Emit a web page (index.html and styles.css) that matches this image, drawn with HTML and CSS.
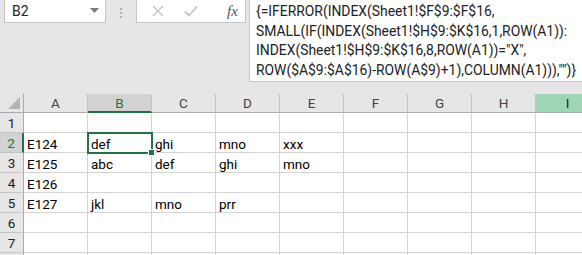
FILE: index.html
```html
<!DOCTYPE html>
<html lang="en">
<head>
    <meta charset="UTF-8">
    <title>Sheet</title>
    <link rel="stylesheet" href="styles.css">
</head>
<body>
<div class="toolbar">
    <div class="namebox">
        <span>B2</span>
        <svg class="caret" width="9" height="5" viewBox="0 0 9 5"><path d="M0 0h9L4.5 5z" fill="#7a7a7a"/></svg>
    </div>
    <div class="dots"><i></i><i></i><i></i></div>
    <div class="fbuttons">
        <svg width="12" height="12" viewBox="0 0 12 12"><path d="M1 1l10 10M11 1L1 11" stroke="#c4c4c4" stroke-width="1.4"/></svg>
        <svg width="14" height="12" viewBox="0 0 14 12"><path d="M1 6.5l4 4L13 1.5" stroke="#c4c4c4" stroke-width="1.8" fill="none"/></svg>
        <span class="fx">fx</span>
    </div>
    <div class="formula">{=IFERROR(INDEX(Sheet1!$F$9:$F$16,<br>SMALL(IF(INDEX(Sheet1!$H$9:$K$16,1,ROW(A1)):<br>INDEX(Sheet1!$H$9:$K$16,8,ROW(A1))="X",<br>ROW($A$9:$A$16)-ROW(A$9)+1),COLUMN(A1))),"")}</div>
</div>

<div class="grid">
    <div class="hd corner"><span class="tri"></span></div>
    <div class="hd col">A</div>
    <div class="hd col sel">B</div>
    <div class="hd col">C</div>
    <div class="hd col">D</div>
    <div class="hd col">E</div>
    <div class="hd col">F</div>
    <div class="hd col">G</div>
    <div class="hd col">H</div>
    <div class="hd col hover">I</div>

    <div class="hd row">1</div>
    <div class="c"></div><div class="c"></div><div class="c"></div><div class="c"></div><div class="c"></div><div class="c"></div><div class="c"></div><div class="c"></div><div class="c"></div>

    <div class="hd row sel">2</div>
    <div class="c">E124</div><div class="c active">def<span class="handle"></span></div><div class="c">ghi</div><div class="c">mno</div><div class="c">xxx</div><div class="c"></div><div class="c"></div><div class="c"></div><div class="c"></div>

    <div class="hd row">3</div>
    <div class="c">E125</div><div class="c">abc</div><div class="c">def</div><div class="c">ghi</div><div class="c">mno</div><div class="c"></div><div class="c"></div><div class="c"></div><div class="c"></div>

    <div class="hd row">4</div>
    <div class="c">E126</div><div class="c"></div><div class="c"></div><div class="c"></div><div class="c"></div><div class="c"></div><div class="c"></div><div class="c"></div><div class="c"></div>

    <div class="hd row">5</div>
    <div class="c">E127</div><div class="c">jkl</div><div class="c">mno</div><div class="c">prr</div><div class="c"></div><div class="c"></div><div class="c"></div><div class="c"></div><div class="c"></div>

    <div class="hd row">6</div>
    <div class="c"></div><div class="c"></div><div class="c"></div><div class="c"></div><div class="c"></div><div class="c"></div><div class="c"></div><div class="c"></div><div class="c"></div>

    <div class="hd row">7</div>
    <div class="c"></div><div class="c"></div><div class="c"></div><div class="c"></div><div class="c"></div><div class="c"></div><div class="c"></div><div class="c"></div><div class="c"></div>

    <div class="hd row"></div>
    <div class="c"></div><div class="c"></div><div class="c"></div><div class="c"></div><div class="c"></div><div class="c"></div><div class="c"></div><div class="c"></div><div class="c"></div>
</div>
</body>
</html>
```
FILE: styles.css
```css
body {
    margin: 0;
    width: 582px;
    height: 255px;
    overflow: hidden;
    background: #e6e6e6;
    font-family: Roboto, "Liberation Sans", sans-serif;
    color: #222;
}

/* formula bar */
.toolbar { display: flex; align-items: flex-start; height: 94px; }
.toolbar > * { flex-shrink: 0; }
.namebox {
    margin-left: 4px;
    width: 102px;
    height: 23px;
    background: #fff;
    border: 1px solid #c6c6c6;
    border-top: none;
    display: flex;
    align-items: center;
    justify-content: space-between;
    padding: 0 6px 0 7px;
    box-sizing: border-box;
    font-size: 14px;
}
.namebox .caret { margin-top: -2px; }
.dots { width: 30px; display: flex; flex-direction: column; align-items: center; gap: 2px; padding-top: 8px; }
.dots i { width: 2px; height: 2px; background: #b0b0b0; }
.fbuttons {
    width: 110px;
    height: 23px;
    box-sizing: border-box;
    background: #fff;
    border: 1px solid #c6c6c6;
    border-top: none;
    display: flex;
    align-items: center;
    padding-left: 15px;
    gap: 20px;
}
.fx { font-family: "Liberation Serif", serif; font-style: italic; font-size: 15px; color: #555; margin-left: 9px; }
.toolbar > .formula {
    margin-left: 3px;
    flex: 1 1 0;
    min-width: 0;
    overflow: hidden;
    height: 82px;
    box-sizing: border-box;
    background: #fff;
    border: 1px solid #c6c6c6;
    border-top: none;
    border-right: none;
    padding: 2px 0 0 6px;
    font-size: 13.9px;
    line-height: 19.5px;
    white-space: nowrap;
    color: #222;
}

/* sheet */
.grid {
    display: grid;
    grid-template-columns: 24px repeat(9, 64px);
    grid-template-rows: 19px repeat(8, 20px);
    background: #fff;
}
.hd {
    background: #e6e6e6;
    color: #444;
    font-size: 13.5px;
    display: flex;
    align-items: center;
    justify-content: center;
    box-sizing: border-box;
}
.col { border-right: 1px solid #c4c4c4; border-bottom: 1px solid #ababab; }
.row { border-right: 1px solid #ababab; border-bottom: 1px solid #c4c4c4; color: #222; }
.corner { border-right: 1px solid #ababab; border-bottom: 1px solid #ababab; position: relative; }
.tri {
    position: absolute;
    right: 3px;
    bottom: 3px;
    width: 0;
    height: 0;
    border-left: 12px solid transparent;
    border-bottom: 12px solid #b4b4b4;
}
.col.sel { background: #d2d2d2; color: #217346; border-bottom: 2px solid #217346; }
.row.sel { background: #d2d2d2; color: #217346; border-right: 2px solid #217346; }
.col.hover { background: #9fd5b7; color: #222; }
.c {
    border-right: 1px solid #d4d4d4;
    border-bottom: 1px solid #d4d4d4;
    box-sizing: border-box;
    font-size: 13.5px;
    color: #000;
    padding: 3px 0 0 3px;
    line-height: 16px;
    white-space: nowrap;
    position: relative;
}
.c.active { outline: 2px solid #217346; outline-offset: -1px; z-index: 1; }
.handle {
    position: absolute;
    right: -4px;
    bottom: -4px;
    width: 5px;
    height: 5px;
    background: #217346;
    border: 1px solid #fff;
}
```
